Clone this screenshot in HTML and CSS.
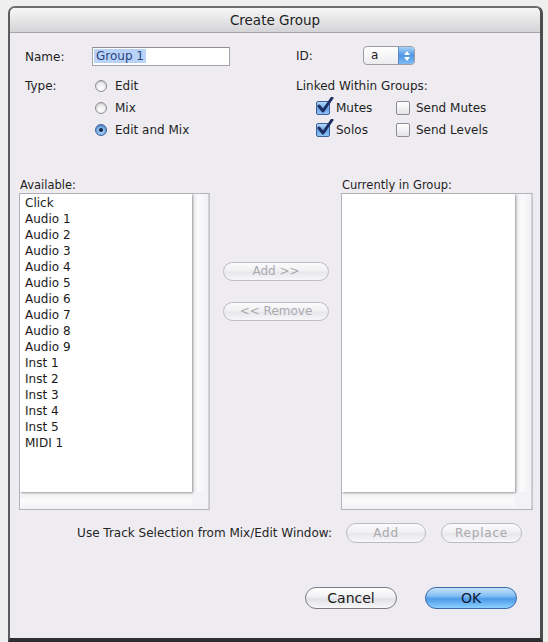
FILE: index.html
```html
<!DOCTYPE html>
<html>
<head>
<meta charset="utf-8">
<title>Create Group</title>
<link rel="stylesheet" href="styles.css">
</head>
<body>
<div class="window">
  <div class="titlebar">Create Group</div>
  <div class="content">
    <div class="top">
      <div class="col-left">
        <div class="name-row">
          <span class="lbl">Name:</span>
          <div class="field"><span class="sel">Group 1</span></div>
        </div>
        <div class="type-row">
          <span class="lbl type-lbl">Type:</span>
          <div class="radios">
            <div class="radio-row"><span class="radio"></span><span>Edit</span></div>
            <div class="radio-row"><span class="radio"></span><span>Mix</span></div>
            <div class="radio-row"><span class="radio on"></span><span>Edit and Mix</span></div>
          </div>
        </div>
      </div>
      <div class="col-right">
        <div class="id-row">
          <span class="lbl">ID:</span>
          <div class="popup">
            <span class="popup-val">a</span>
            <span class="stepper">
              <svg width="8" height="12" viewBox="0 0 8 12"><path d="M4 1 L7 5 L1 5 Z M4 11 L7 7 L1 7 Z" fill="#fff"/></svg>
            </span>
          </div>
        </div>
        <div class="linked-lbl">Linked Within Groups:</div>
        <div class="checks">
          <div class="check-row"><span class="cb on"><svg width="18" height="18" viewBox="0 0 18 18"><path d="M3 9 L7 14 L16 1" fill="none" stroke="#1d2f63" stroke-width="3" stroke-linecap="round" stroke-linejoin="round"/></svg></span><span>Mutes</span></div>
          <div class="check-row"><span class="cb"></span><span>Send Mutes</span></div>
          <div class="check-row"><span class="cb on"><svg width="18" height="18" viewBox="0 0 18 18"><path d="M3 9 L7 14 L16 1" fill="none" stroke="#1d2f63" stroke-width="3" stroke-linecap="round" stroke-linejoin="round"/></svg></span><span>Solos</span></div>
          <div class="check-row"><span class="cb"></span><span>Send Levels</span></div>
        </div>
      </div>
    </div>

    <div class="lists">
      <div class="list-col left-col">
        <div class="list-lbl">Available:</div>
        <div class="listbox">
          <div class="list-area">
            <div class="item">Click</div>
            <div class="item">Audio 1</div>
            <div class="item">Audio 2</div>
            <div class="item">Audio 3</div>
            <div class="item">Audio 4</div>
            <div class="item">Audio 5</div>
            <div class="item">Audio 6</div>
            <div class="item">Audio 7</div>
            <div class="item">Audio 8</div>
            <div class="item">Audio 9</div>
            <div class="item">Inst 1</div>
            <div class="item">Inst 2</div>
            <div class="item">Inst 3</div>
            <div class="item">Inst 4</div>
            <div class="item">Inst 5</div>
            <div class="item">MIDI 1</div>
          </div>
          <div class="vtrack"></div>
          <div class="htrack"></div>
          <div class="corner"></div>
        </div>
      </div>
      <div class="mid-col">
        <div class="btn disabled mid-btn">Add &gt;&gt;</div>
        <div class="btn disabled mid-btn">&lt;&lt; Remove</div>
      </div>
      <div class="list-col right-col">
        <div class="list-lbl">Currently in Group:</div>
        <div class="listbox">
          <div class="list-area"></div>
          <div class="vtrack"></div>
          <div class="htrack"></div>
          <div class="corner"></div>
        </div>
      </div>
    </div>

    <div class="sel-row">
      <span class="sel-text">Use Track Selection from Mix/Edit Window:</span>
      <div class="btn disabled small add-btn">Add</div>
      <div class="btn disabled small replace-btn">Replace</div>
    </div>

    <div class="final-row">
      <div class="btn big">Cancel</div>
      <div class="btn big default">OK</div>
    </div>
  </div>
</div>
</body>
</html>
```

FILE: styles.css
```css
html, body {
  margin: 0;
  padding: 0;
}
body {
  background: #efeff0;
  width: 548px;
  height: 642px;
  overflow: hidden;
  font-family: "DejaVu Sans", "Liberation Sans", sans-serif;
  font-size: 12px;
  color: #1f1f1f;
}
.window {
  box-sizing: border-box;
  margin: 6px 0 0 8px;
  width: 535px;
  height: 636px;
  border-top: 2px solid #6e6e6e;
  border-left: 2px solid #5c5c5c;
  border-right: 3px solid #4c4c4c;
  border-bottom: 4px solid #2e2e2e;
  border-radius: 7px 7px 0 0;
  background: #eeecf1;
  display: flex;
  flex-direction: column;
  overflow: hidden;
}
.titlebar {
  height: 24px;
  border-bottom: 1px solid #a4a4a8;
  background: linear-gradient(#f6f6f6, #e2e2e4 60%, #d4d4d6);
  text-align: center;
  line-height: 25px;
  font-size: 13.5px;
  color: #1e1e1e;
  flex: none;
}
.content {
  flex: 1;
  display: flex;
  flex-direction: column;
}

/* top section */
.top {
  height: 145px;
  box-sizing: border-box;
  padding: 14px 0 0 15px;
  display: flex;
  flex: none;
}
.col-left {
  width: 271px;
  flex: none;
}
.lbl {
  width: 67px;
  flex: none;
}
.name-row {
  display: flex;
  align-items: center;
  height: 19px;
}
.field {
  box-sizing: border-box;
  width: 138px;
  height: 19px;
  background: #fff;
  border: 1px solid #a3a3a8;
  border-top-color: #8d8d92;
  padding: 1px 0 0 1px;
}
.sel {
  display: inline-block;
  background: #b8d3f6;
  color: #2c4583;
  font-size: 12px;
  line-height: 14px;
  padding: 0 2px;
}
.type-row {
  display: flex;
  margin-top: 9px;
}
.type-lbl {
  line-height: 22px;
}
.radios {
  display: flex;
  flex-direction: column;
}
.radio-row {
  display: flex;
  align-items: center;
  height: 22px;
  font-size: 12px;
}
.radio {
  box-sizing: border-box;
  width: 12px;
  height: 12px;
  margin: 0 8px 0 3px;
  border-radius: 50%;
  border: 1px solid #8e8e93;
  background: radial-gradient(circle at 50% 70%, #ffffff, #dcdce0);
  box-shadow: inset 0 1px 1px rgba(0,0,0,0.15);
  position: relative;
}
.radio.on {
  border-color: #3d5f9c;
  background: radial-gradient(circle at 50% 65%, #b8dcfb, #5b95d8 80%);
}
.radio.on::after {
  content: "";
  position: absolute;
  left: 3px;
  top: 3px;
  width: 4px;
  height: 4px;
  border-radius: 50%;
  background: #142447;
}
.col-right {
  flex: none;
}
.id-row {
  display: flex;
  align-items: center;
  height: 19px;
  margin-top: -1px;
}
.popup {
  box-sizing: border-box;
  width: 52px;
  height: 19px;
  border: 1px solid #9c9ca2;
  border-radius: 4px;
  background: linear-gradient(#ffffff, #ececef);
  display: flex;
  overflow: hidden;
}
.popup-val {
  flex: 1;
  padding-left: 7px;
  line-height: 17px;
}
.stepper {
  width: 15px;
  background: linear-gradient(#a8d2fa, #4e97e6 50%, #7fbcf4);
  border-left: 1px solid #5e86c0;
  display: flex;
  align-items: center;
  justify-content: center;
}
.linked-lbl {
  margin-top: 14px;
  line-height: 14px;
}
.checks {
  margin-top: 4px;
  padding-left: 20px;
  display: grid;
  grid-template-columns: 80px 100px;
  grid-auto-rows: 22px;
}
.check-row {
  display: flex;
  align-items: center;
}
.cb {
  box-sizing: border-box;
  width: 14px;
  height: 14px;
  border: 1px solid #8d8d93;
  border-radius: 2px;
  background: linear-gradient(#ffffff, #e4e4e8);
  margin-right: 6px;
  position: relative;
  flex: none;
}
.cb.on {
  border-color: #3d5f9c;
  background: linear-gradient(#b5d9fa, #6aa5e6 55%, #8fc3f3);
}
.cb svg {
  position: absolute;
  left: -1px;
  top: -5px;
}

/* lists */
.lists {
  display: flex;
  padding-left: 9px;
  flex: none;
}
.list-col {
  display: flex;
  flex-direction: column;
}
.left-col { width: 191px; }
.right-col { width: 192px; }
.list-lbl {
  line-height: 14px;
  height: 15px;
  padding-left: 1px;
  font-size: 11.5px;
}
.listbox {
  box-sizing: border-box;
  height: 317px;
  border: 1px solid #b4b4ba;
  border-right-color: #c4c4ca;
  background: #f6f5f8;
  display: grid;
  grid-template-columns: 1fr 17px;
  grid-template-rows: 1fr 17px;
}
.list-area {
  background: #fff;
  box-shadow: 1px 1px 2px rgba(0,0,0,0.35);
  padding-top: 1px;
  position: relative;
}
.vtrack {
  background: linear-gradient(90deg, #e8e7eb, #fbfbfc 40%, #f1f0f4);
  border-right: 1px solid #d2d2d8;
}
.htrack {
  background: linear-gradient(#eeedf1, #fbfbfc 50%, #f3f2f6);
}
.corner {
  background: #f3f2f6;
  border-right: 1px solid #d2d2d8;
}
.item {
  font-size: 12px;
  line-height: 16px;
  height: 16px;
  padding-left: 5px;
  color: #1a1a1a;
}
.mid-col {
  width: 106px;
  margin: 0 12px 0 13px;
  padding-top: 84px;
  display: flex;
  flex-direction: column;
  gap: 21px;
}
.btn {
  box-sizing: border-box;
  border: 1px solid #8c8c92;
  border-radius: 11px;
  background: linear-gradient(#ffffff, #f1f1f3 45%, #e2e2e6 55%, #f7f7f9);
  text-align: center;
  color: #1e1e1e;
}
.btn.disabled {
  border-color: #bcbcc2;
  color: #a9a9ae;
  background: linear-gradient(#fbfbfc, #f1f1f3 45%, #e8e8eb 55%, #f7f7f9);
}
.mid-btn {
  height: 19px;
  line-height: 17px;
  font-size: 12px;
}

/* bottom */
.sel-row {
  margin-top: 13px;
  height: 20px;
  display: flex;
  align-items: center;
  justify-content: flex-end;
  padding-right: 18px;
  flex: none;
}
.sel-text {
  margin-right: 14px;
  color: #262626;
}
.small {
  height: 20px;
  line-height: 18px;
  font-size: 12px;
  letter-spacing: 0.8px;
}
.add-btn { width: 80px; margin-right: 15px; }
.replace-btn { width: 81px; }
.final-row {
  margin-top: 44px;
  display: flex;
  justify-content: flex-end;
  gap: 28px;
  padding-right: 23px;
  flex: none;
}
.big {
  width: 92px;
  height: 22px;
  line-height: 20px;
  font-size: 14px;
  border-color: #7c7c82;
  color: #1a1a1a;
}
.big.default {
  border-color: #3c67a8;
  background: linear-gradient(#c5e3fb, #82bdf2 40%, #4d9ae8 55%, #8cd0ff);
  color: #0f1a33;
}
```
